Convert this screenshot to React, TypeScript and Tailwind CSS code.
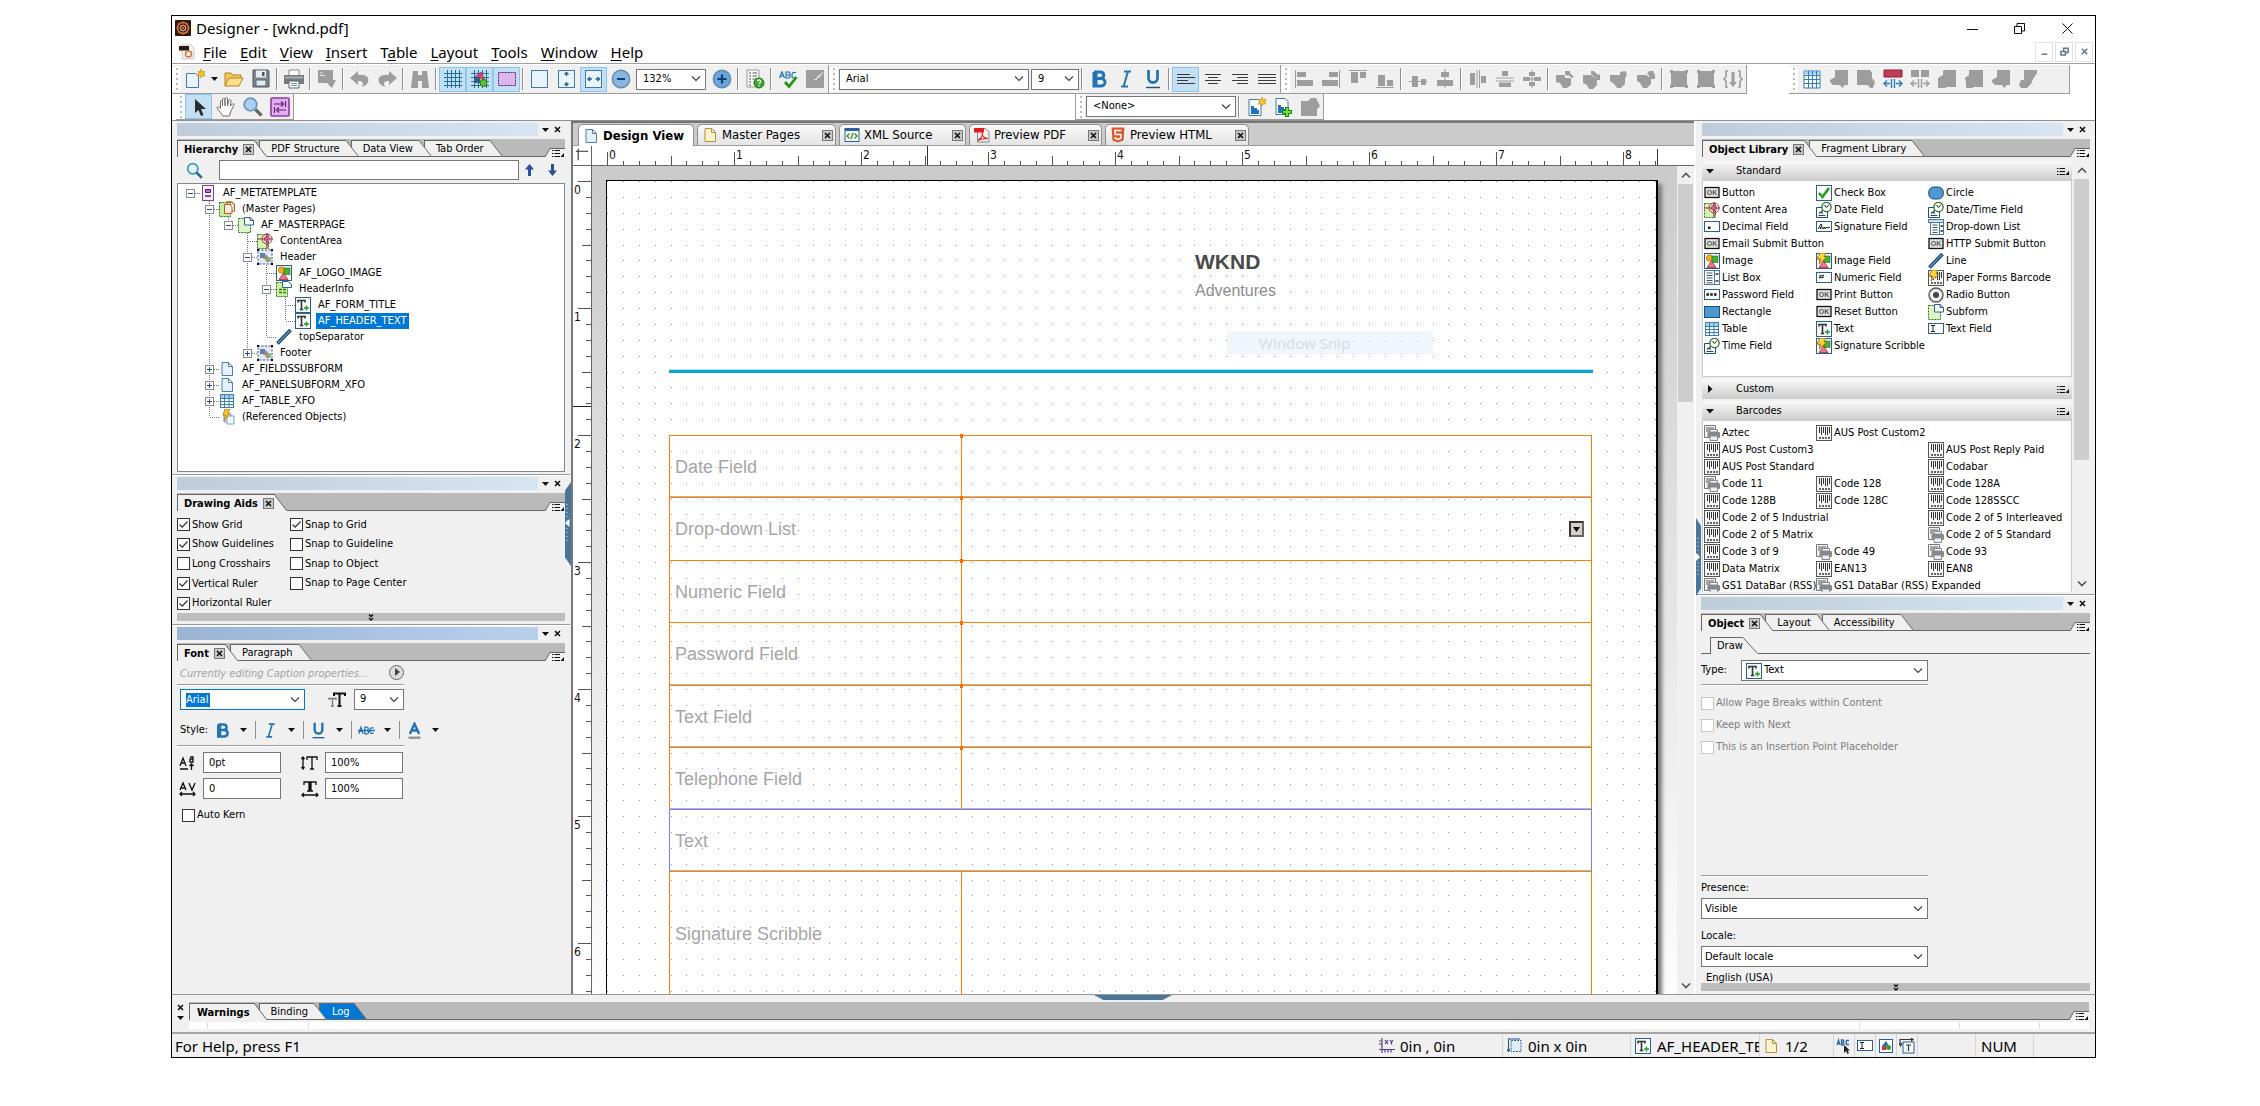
import React from "react";

const TAHOMA = "font-['DejaVu_Sans_Condensed','DejaVu_Sans',sans-serif]";
const G = "#9d9d9d";

/* ---------- object icons, drawn on a 16px square ---------- */

const page = (fill: string, stroke: string) => (
  <path d="M3 1.5h6.5l4 4v9H3zM9.5 1.5v4h4" fill={fill} stroke={stroke} />
);
const bolt = <path d="M4 0h6L8 4h3L3 11l1.500-5H1z" fill="#ffd43a" stroke="#8a6a1a" strokeWidth=".8" />;
const clock = (
  <>
    <path d="M.5 5.500h11v10H.5z" fill="#fff" stroke="#1d4f7c" />
    <path d="M2.500 13.500h7M3 11.500l3-2.500v3" stroke="#345" strokeWidth="1.200" fill="none" />
    <circle cx="10.500" cy="5" r="4.600" fill="#fff" stroke="#2f7d2c" strokeWidth="1.400" />
    <path d="M8.500 3l2 2.500 2.500-3" stroke="#222" fill="none" />
  </>
);
const pic = (
  <>
    <rect x=".5" y=".5" width="15" height="15" fill="#fff" stroke="#2c5f8e" />
    <circle cx="5.500" cy="5" r="3.300" fill="#f6a91b" stroke="#b06f00" strokeWidth=".6" />
    <rect x="8" y="3" width="6" height="6.500" fill="#45b336" stroke="#1f6b17" strokeWidth=".6" />
    <path d="M3 14.500l4.500-6.500 4.500 6.500z" fill="#e9788b" stroke="#a3283f" strokeWidth=".8" />
  </>
);
const bars = (
  <>
    <rect x=".5" y=".5" width="15" height="15" fill="#f6f6f6" stroke="#555" />
    <path d="M3.500 2v6M5.500 2v8M7.500 2v6M9.500 2v8M11.500 2v8M13.500 2v6" stroke="#333" />
    <path d="M3 13h11" stroke="#666" strokeWidth="2" strokeDasharray="2 1" />
  </>
);
const box = <rect x=".5" y="2.500" width="15" height="10" fill="#fff" stroke="#2c5f8e" />;

const ICONS: Record<string, React.ReactNode> = {
  ok: (
    <>
      <rect x="1" y="2.500" width="14" height="10" fill="#e2e2e2" stroke="#111" strokeWidth="1.300" />
      <text x="8" y="10" fontSize="7" fontWeight="bold" textAnchor="middle" fill="#555" fontFamily="Liberation Sans">OK</text>
    </>
  ),
  check: (
    <>
      <rect x=".5" y=".5" width="15" height="15" fill="#fff" stroke="#2c5f8e" />
      <path d="M3 8l3.500 4L13 3" fill="none" stroke="#1fa01a" strokeWidth="2.600" />
    </>
  ),
  circle: <rect x=".8" y="2" width="14.500" height="12" rx="5" fill="#4f97cf" stroke="#1d4f7c" />,
  content: (
    <>
      <path d="M.5 1.500h11v14H.5z" fill="#d5f2b4" stroke="#2e7a12" strokeDasharray="2 1" />
      <path d="M0 6h16M10 0v15" stroke="#a02045" strokeWidth="1.200" />
      <circle cx="10" cy="6" r="5" fill="none" stroke="#b0355a" />
      <circle cx="10" cy="6" r="2.500" fill="#f2bccb" stroke="#b0355a" />
      <path d="M7 6h6M10 3v6" stroke="#a02045" strokeWidth=".8" />
    </>
  ),
  date: clock,
  decimal: <>{box}<rect x="4" y="7.500" width="2.500" height="2.500" fill="#222" /></>,
  sign: <>{box}<path d="M2 10l3-5 1 1-2 4 3-2v2l2-2v2l2-2 1 1 2-1" fill="none" stroke="#222" /></>,
  num: <>{box}<path d="M3.500 8.500l1.500-4M6 8.500l1.500-4M3 5.800h5M2.700 7.500h5" stroke="#222" strokeWidth=".8" /></>,
  pass: <>{box}<path d="M2.500 7.500h10" stroke="#111" strokeWidth="2.400" strokeDasharray="2.400 1.400" /></>,
  textf: <>{box}<path d="M3 4.500h4M3 10.500h4M5 4.500v6" stroke="#222" /></>,
  drop: (
    <>
      <rect x=".5" y=".5" width="15" height="3" fill="#cfe2f3" stroke="#4a7aa5" />
      <rect x="2.500" y="3.500" width="13" height="12" fill="#fff" stroke="#4a7aa5" />
      <path d="M4.500 6h5M4.500 8.500h5M4.500 11h5M4.500 13.500h5" stroke="#456" />
      <path d="M11.500 3.500v12" stroke="#4a7aa5" />
      <path d="M12.500 7h2.500M12.500 12h2.500" stroke="#234" strokeWidth="1.500" />
    </>
  ),
  list: (
    <>
      <rect x=".5" y=".5" width="15" height="14" fill="#fff" stroke="#4a7aa5" />
      <path d="M2.500 3h6M2.500 5.500h6M2.500 8h6M2.500 10.500h6M2.500 12.800h6" stroke="#456" />
      <path d="M10.500 .5v14" stroke="#4a7aa5" />
      <path d="M11.500 4h3M11.500 11h3" stroke="#234" strokeWidth="1.500" />
    </>
  ),
  image: pic,
  imgf: <>{pic}{bolt}</>,
  paper: <>{bars}{bolt}</>,
  line: <><path d="M1.500 14.500L14.500 1" stroke="#153a5e" strokeWidth="3.600" /><path d="M2 14L14 1.500" stroke="#4f97cf" strokeWidth="1.600" /></>,
  radio: (
    <>
      <circle cx="8" cy="8" r="7" fill="#eee" stroke="#555" strokeWidth="1.400" />
      <circle cx="8" cy="8" r="3" fill="#444" />
    </>
  ),
  rect: <rect x=".5" y="2.500" width="15" height="11" fill="#4f97cf" stroke="#1d4f7c" />,
  subform: (
    <>
      <path d="M.5 1.500h12v14H.5z" fill="#dff5c8" stroke="#2e7a12" strokeDasharray="2 1" />
      <path d="M6.500 .5h5.500l3.500 3v4.500h-9z" fill="#fff" stroke="#2c5f9e" />
      <path d="M12 .5v3h3.500" fill="none" stroke="#2c5f9e" />
    </>
  ),
  table: (
    <>
      <rect x="1.500" y="1.500" width="13" height="13" fill="#fff" stroke="#3a7ebb" />
      <path d="M2 3.500h12" stroke="#9fd3e6" strokeWidth="3" />
      <path d="M1.500 5.500h13M1.500 8.500h13M1.500 11.500h13M5.500 1.500v13M10 1.500v13" stroke="#3a7ebb" />
    </>
  ),
  text: (
    <>
      <rect x=".5" y=".5" width="15" height="15" fill="#f5f9fd" stroke="#2c5f8e" />
      <path d="M3 5.500V3.500h7v2M6.500 3.500v9M4.800 12.500h3.400" stroke="#333" strokeWidth="1.600" fill="none" />
      <path d="M9 11h5M11.500 8.500v5" stroke="#2f9a20" strokeWidth="1.400" />
    </>
  ),
  bar: bars,
  barp: (
    <>
      <path d="M.5 .5h11v12H.5z" fill="#f4f4f4" stroke="#777" />
      <path d="M3 2v5M5 2v5M7 2v3M9 2v3" stroke="#555" />
      <rect x="3.500" y="7" width="12.500" height="6" rx="1" fill="#84898e" />
      <path d="M6 4.500h7.500V7H6z" fill="#fff" stroke="#888" />
      <path d="M6 11h7.500v4.500H6z" fill="#e8eef2" stroke="#888" />
    </>
  ),
  form: (
    <>
      <rect x="2.500" y=".5" width="11" height="15" fill="#fbf3ff" stroke="#8a3aa8" />
      <path d="M5.500 4.500h5v3h-5z" fill="#b678cc" stroke="#5b1d78" />
      <path d="M5 11h6" stroke="#5b1d78" strokeWidth="1.500" />
    </>
  ),
  masters: (
    <>
      <path d="M.5 1.500h11v14H.5z" fill="#c8eda0" stroke="#2e7a12" strokeDasharray="2 1" />
      <path d="M5.500 3.500h5l2.500 2v7H5.500z" fill="#fff3ea" stroke="#d2541a" />
      <path d="M8 3V.800h4.500l3 2.700V10H13" fill="none" stroke="#d2541a" strokeWidth="1.200" />
    </>
  ),
  group: (
    <>
      <rect x="1" y="1" width="14" height="14" fill="#e4e8f8" stroke="#3c3c8c" strokeDasharray="2 1.500" />
      <path d="M0 0h2v2H0zM14 0h2v2h-2zM0 14h2v2H0zM14 14h2v2h-2z" fill="#111" />
      <rect x="3" y="4" width="5" height="5" fill="#5b84b5" />
      <path d="M6 10l3-5 3 5z" fill="#c56a86" />
      <circle cx="11" cy="10.500" r="2.700" fill="#7fae6a" />
    </>
  ),
  info: (
    <>
      <path d="M.5 1.500h11v14H.5z" fill="#cdf0a4" stroke="#2e7a12" strokeDasharray="2 1" />
      <path d="M3 8.500h7M3 11.500h7" stroke="#2e7a12" strokeWidth="1.500" strokeDasharray="3 1" />
      <path d="M6.500 .5h5.500l3.500 3v3h-9z" fill="#fff" stroke="#2c5f9e" />
    </>
  ),
  doc: page("#e6f0fa", "#4b7fb5"),
  gold: page("#fdf3cf", "#b8913a"),
  refs: (
    <>
      <path d="M5 5h7v8H5z" fill="#e6f0fa" stroke="#7ba0c8" />
      <path d="M8 7h7v8H8z" fill="#f3f8fd" stroke="#7ba0c8" />
      <path d="M6 0h5L8.500 4H11l-6 8 1.500-6H4z" fill="#ffc52a" stroke="#a87410" strokeWidth=".8" />
    </>
  ),
  xml: (
    <>
      <rect x="1" y="1.500" width="14" height="13" fill="#f2f7fc" stroke="#2c5f9e" />
      <path d="M1 3h14" stroke="#2c5f9e" strokeWidth="2" />
      <path d="M5.500 6.500L3 9l2.500 2.500M10.500 6.500L13 9l-2.500 2.500M9 6l-2 6" fill="none" stroke="#4c8a1c" strokeWidth="1.400" />
    </>
  ),
  pdf: (
    <>
      <path d="M3.500 1.500h8l3.500 3.500v10H3.500z" fill="#f3f3f3" stroke="#888" />
      <path d="M0 1h10v4.500H0z" fill="#e21b1b" />
      <path d="M4 13.500c4-3 5-6 4-8 0 4 3 6 6 6-4 0-7 0-10 2z" fill="none" stroke="#e21b1b" strokeWidth="1.200" />
    </>
  ),
  html: (
    <>
      <path d="M1.500 .5h13l-1 13L8 15.500l-5.500-2z" fill="#e4542a" />
      <path d="M11.500 3.500H5l.3 4h5.700l-.4 4L8 12.300 5.400 11.500l-.1-1.500" fill="none" stroke="#fff" strokeWidth="1.600" />
    </>
  ),
  coords: (
    <path d="M3 0v15M0 11.500h16M6 11.500v3M9 11.500v3M12 11.500v3M0 3h3M0 6h3M6 2l3 4M9 2L6 6M11 2l1.500 2L14 2M12.500 4v2.500" stroke="#5a3f8c" fill="none" strokeWidth="1.200" />
  ),
  size: (
    <>
      <rect x="4" y="2.500" width="10" height="11" fill="#e3eefa" stroke="#2c5f9e" strokeDasharray="2 1" />
      <path d="M1.500 1v12M1 1h12M0 11l1.500 3L3 11" stroke="#1d4f8c" fill="none" />
    </>
  ),
  abcptr: (
    <>
      <path d="M1 7l1.500-5L4 7M1.500 5.500h2M5.500 7V2h1.500l1 1.200-1 1.300H5.500 7l1 1.200L7 7zM13 2.500h-2.500L10 4.500l.5 2H13" fill="none" stroke="#2c6aa8" strokeWidth="1.300" />
      <path d="M8 7v8l2-2 1.500 3 1.500-1-1.500-2.500H14z" fill="#222" />
    </>
  ),
  shapes: (
    <>
      <rect x="1.500" y="1.500" width="13" height="13" fill="#fff" stroke="#2c5f8e" />
      <path d="M4 8l4-5 3 5z" fill="#2c6aa8" />
      <circle cx="10.500" cy="9.500" r="2.500" fill="#2fa12a" />
      <rect x="4" y="8" width="4" height="4" fill="#cc3355" />
    </>
  ),
  flow: (
    <>
      <rect x="4" y="4" width="11" height="11" fill="#f5f9fd" stroke="#2c5f8e" />
      <path d="M1 6V1.500h13M12 0l2 1.500L12 3M0 5l1.500 3L3 5M7 7h5M9.500 7v6" fill="none" stroke="#333" strokeWidth="1.200" />
    </>
  ),
  logo: (
    <>
      <rect width="16" height="16" rx="1" fill="#2b1a12" />
      <circle cx="8" cy="8" r="5.500" fill="none" stroke="#e0733a" strokeWidth="1.500" />
      <circle cx="8" cy="8" r="2.800" fill="none" stroke="#d8b9a0" />
      <path d="M8 1v14M1 8h14M3 3l10 10M13 3L3 13" stroke="#e0733a" strokeWidth=".6" />
    </>
  ),
  file: (
    <>
      <path d="M3 1h9l3 3v11H3z" fill="#f1f1f1" stroke="#c9c9c9" />
      <path d="M0 2h10v4.500H0z" fill="#251a16" />
      <circle cx="9.500" cy="10" r="3" fill="none" stroke="#e0733a" strokeWidth="1.500" />
    </>
  ),
};

function Icon({ name }: { name: string }) {
  return (
    <svg viewBox="0 0 16 16" className="size-4 shrink-0" aria-hidden="true">
      {ICONS[name]}
    </svg>
  );
}

/* ---------- toolbar icons, drawn on a 20px square ---------- */

const spark = <path d="M16 0l1 3 3-1-1 3 1 2-3 0-1 2-1-2-3 0 1.500-2L13 2l2 1z" fill="#f5c32c" stroke="#c08a10" strokeWidth=".6" />;
const blank = <rect x="1.500" y="1.500" width="16" height="17" fill="#eaf3fb" stroke="#3c7ab5" />;
const gridp = <path d="M1 4.500h18M1 8.500h18M1 12.500h18M1 16.500h18M4.500 1v18M8.500 1v18M12.500 1v18M16.500 1v18" stroke="#1f6fae" />;

const TOOLS: Record<string, React.ReactNode> = {
  new: <><path d="M1.500 4.500h9l3 3v11h-12z" fill="#eaf3fb" stroke="#3c7ab5" />{spark}</>,
  open: <><path d="M1 17V4h6l2 2h8v3" fill="#f6c65b" stroke="#b9821d" /><path d="M1 17l4-8h14l-4 8z" fill="#ffe08e" stroke="#b9821d" /></>,
  save: <><path d="M2 1h15l1 1v16H2z" fill="#7d8790" stroke="#555" /><path d="M5 1.500h10v7H5z" fill="#e9edf0" /><path d="M5 11h10v6H5z" fill="#dfeaf2" stroke="#567" /><path d="M11 3h2.500v4H11z" fill="#555" /></>,
  print: <><path d="M5 1h10v6H5z" fill="#fff" stroke="#888" /><path d="M0 6h20v9H0z" fill="#737a80" /><path d="M1 8.500h18" stroke="#a9b0b5" strokeWidth="2" /><path d="M5 12h10v7H5z" fill="#fff" stroke="#666" /><path d="M7 14.500h6M7 16.500h6" stroke="#59c" /></>,
  tag: <><path d="M1 1h15v10h3l-4 8-5-5H1z" fill={G} /><path d="M3 4h3M3 6.500h5" stroke="#e8e8e8" /></>,
  undo: <path d="M0 9l8-7v4c8-1 12 3 10 7-1 3-4 4-6 5 2-4 1-6-4-6v4z" fill={G} />,
  redo: <path d="M20 9l-8-7v4C4 5 0 9 2 13c1 3 4 4 6 5-2-4-1-6 4-6v4z" fill={G} />,
  find: <path d="M3 2h5v4h4V2h5l2 17h-7v-7H8v7H1z" fill={G} />,
  grid: gridp,
  snap: <>{gridp}<path d="M5 8l6-5 4 8z" fill="#d8476a" stroke="#9c2242" strokeWidth=".7" /><path d="M4 8h6v6H4z" fill="#345b8c" /><circle cx="13.500" cy="14" r="3.500" fill="#59c22c" stroke="#2d7a10" /></>,
  area: <rect x="1.500" y="3.500" width="17" height="13" fill="#dcb8ea" stroke="#5b1d78" strokeDasharray="2 1" />,
  page1: blank,
  page2: <>{blank}<path d="M9.500 7V3.500M7.500 5.500l2-2 2 2M9.500 13v3.500M7.500 14.500l2 2 2-2" stroke="#1f5f9e" fill="none" strokeWidth="1.300" /></>,
  page3: <>{blank}<path d="M8 10H4M6 8l-2 2 2 2M11.500 10h4M13.500 8l2 2-2 2" stroke="#1f5f9e" fill="none" strokeWidth="1.300" /></>,
  minus: <><circle cx="10" cy="10" r="8.700" fill="#86b7df" stroke="#6a88a6" strokeWidth="1.400" /><path d="M6 10h8" stroke="#0d3f78" strokeWidth="2" /></>,
  plus: <><circle cx="10" cy="10" r="8.700" fill="#6aa6dc" stroke="#6a88a6" strokeWidth="1.400" /><path d="M5.500 10h9M10 5.500v9" stroke="#0d3f78" strokeWidth="2.200" /></>,
  report: <><path d="M2 1h12v17H2z" fill="#fafafa" stroke="#999" /><path d="M4 4h2M7.500 4H12M4 7h2M7.500 7H12M4 10h2M7.500 10H12M4 13h2M4 16h2" stroke="#555" /><circle cx="14" cy="14" r="5" fill="#35a926" stroke="#1d7412" /><path d="M12.300 12.500c0-2 3.400-2 3.400 0 0 1.200-1.700 1.200-1.700 2.500M14 16v1.200" stroke="#fff" fill="none" strokeWidth="1.300" /></>,
  spell: <><path d="M1 2h17v8H1z" fill="#dcebf8" /><path d="M1.500 9L4 3l2.500 6M2.500 7h3M8 9V3h2.500c2 0 2 3 0 3H8h2.500c2.500 0 2.500 3 0 3zM18 3.500h-3l-1 1.500v2.500l1 1.500h3" fill="none" stroke="#2c6aa8" strokeWidth="1.100" /><path d="M7 13l4 4.500L18.500 8" fill="none" stroke="#25991c" strokeWidth="2.800" /></>,
  chart: <><path d="M1 1h18v18H1z" fill={G} /><path d="M6 6h3v5h3V9h2l4-5v-1l-5 4-2 2v1H9V6z" fill="#e4e4e4" /></>,
  bold: <path d="M5 3h6c5 0 5 6.500 0 6.500H7M5 3V17h6.500c6 0 6-7.500 0-7.500M7 3V17" fill="none" stroke="#2474b5" strokeWidth="3" />,
  italic: <path d="M8 2.500h7M5 17.500h7M12 2.500l-4.500 15" fill="none" stroke="#2474b5" strokeWidth="2" />,
  under: <><path d="M5.500 1v8c0 6 9 6 9 0V1" fill="none" stroke="#2474b5" strokeWidth="2.800" /><path d="M3 18.500h14" stroke="#174f86" strokeWidth="1.400" /></>,
  left: <path d="M1 5.500h13M1 8.500h18M1 11.500h11M1 14.500h18" stroke="#3a3a3a" />,
  center: <path d="M2 5.500h16M5 8.500h10M2 11.500h16M5 14.500h10" stroke="#3a3a3a" />,
  right: <path d="M2 5.500h16M7 8.500h11M2 11.500h16M7 14.500h11" stroke="#3a3a3a" />,
  justify: <path d="M1 5.500h18M1 8.500h18M1 11.500h18M1 14.500h18" stroke="#3a3a3a" strokeWidth="1.200" />,
  al: <path d="M1 1h1v18H1zM3 3h9v5H3zM3 11h16v6H3z" fill={G} />,
  ar: <path d="M18 1h1v18h-1zM8 3h9v5H8zM1 11h16v6H1z" fill={G} />,
  at: <path d="M1 1h18v1H1zM3 3h7v11H3zM12 3h6v6h-6z" fill={G} />,
  ab: <path d="M1 18h18v1H1zM3 6h7v11H3zM12 11h6v6h-6z" fill={G} />,
  mid: <path d="M1 12h18v1H1zM4 7h6v11H4zM13 10h5v6h-5z" fill={G} />,
  cen: <path d="M9.500 0h1v19h-1zM6 3h8v5H6zM2 11h16v6H2z" fill={G} />,
  dh: <path d="M2 4h5v12H2zM8.500 1h1v18h-1zM11 1h1v18h-1zM13 7h5v7h-5z" fill={G} />,
  dv: <path d="M7 2h6v5H7zM1 8.500h18v1H1zM1 11.500h18v1H1zM4 13.500h12v4.500H4z" fill={G} />,
  dc: <path d="M7 3h6v4H7zM7 13h6v4H7zM1 8h7v4H1zM12 8h7v4h-7zM9.500 1h1v18h-1zM1 9.500h18v1H1z" fill={G} />,
  o1: <path d="M1 6h9v3h6v7l-4 3H8l-3-5-4-1zM10 2h5v2l4 4-2 1-4-3-1 1-2-2z" fill={G} />,
  o2: <path d="M1 6h8l6 4v6l-4 4H7l-2-4-4-2zM9 2h3l4 4 2-1v6h-6l2-2-5-4z" fill={G} />,
  o3: <path d="M1 6h10l5 3v6l-4 4H8l-3-4-4-3zM11 6V3l5-1 2 3-2 5-3-2z" fill={G} />,
  o4: <path d="M1 6h9l5 3v6l-4 4H7l-3-5-3-2zM11 5l2-3h4l2 4v4h-5l-1-4z" fill={G} />,
  sq: <path d="M1 1h3v1h12V1h3v3h-1v12h1v3h-3v-1H4v1H1v-3h1V4H1z" fill={G} />,
  br: <><path d="M5 2H3v6L1 10l2 2v6h2M15 2h2v6l2 2-2 2v6h-2" fill="none" stroke={G} strokeWidth="1.600" /><path d="M8.500 3h3v10H14l-4 5-4-5h2.500z" fill={G} /></>,
  tgrid: <><path d="M2 2h16v17H2z" fill="#fff" stroke="#2f7dbd" /><path d="M2 4h16" stroke="#a5cdec" strokeWidth="3" /><path d="M2 6.500h16M2 10.500h16M2 14.500h16M6.500 2v17M10.500 2v17M14.500 2v17" stroke="#2f7dbd" /></>,
  g1: <path d="M6 1h13v15h-3l-3 3-2-3H4l-3-3v-2l5-3z" fill={G} />,
  g2: <path d="M1 1h13l2 3v5l3 4-2 6h-3l-2-3H1z" fill={G} />,
  split: <><path d="M1 1h18v7H1z" fill="#c23b57" stroke="#8d2038" /><path d="M8.500 10v9M11.500 10v9M1 14.500h6M4 11.500l-3 3 3 3M19 14.500h-6M16 11.500l3 3-3 3" stroke="#2f7dbd" fill="none" strokeWidth="1.400" /></>,
  split2: <><path d="M1 1h8v7H1zM11 1h8v7h-8z" fill={G} /><path d="M8.500 10v9M11.500 10v9M1 14.500h6M4 11.500l-3 3 3 3M19 14.500h-6M16 11.500l3 3-3 3" stroke={G} fill="none" strokeWidth="1.400" /></>,
  g3: <path d="M7 1h12v17H9v1H1V9l5-3V2z" fill={G} />,
  g4: <path d="M5 1h14v17H9v1H2v-5l-1-5 4-3z" fill={G} />,
  g5: <path d="M6 1h13v3l-4 6-2 5-4 4H3l-2-3 2-5h3z" fill={G} />,
  arrow: <path d="M6 2v14l3.500-3 2.500 6 2.500-1L12 12h5z" fill="#2b2b2b" />,
  hand: <path d="M7 19l-6-8c0-2 2-1.500 3.500.5V4.500c0-1.500 2-1.500 2 0V9V2.500C6.500 1 9 1 9 2.500V9V1.800c0-1.500 2.500-1.500 2.500 0V9l1.200-5.500c.3-1.500 2.500-1 2.300.5L14.500 9l2-2c1-.8 2 .2 1.500 1l-3.500 7-1 4z" fill="#fff" stroke="#6e6e6e" />,
  zoom: <><circle cx="7.500" cy="7.500" r="6.300" fill="#a9d2f2" stroke="#6f97bd" strokeWidth="1.800" /><path d="M12.500 12.500l6 6" stroke="#666" strokeWidth="3.200" /></>,
  tabs: <><rect x="1" y="1" width="18" height="18" rx="1" fill="#e0b0ec" stroke="#8a3aa8" strokeWidth="1.600" /><path d="M4 7h9M11 4.500L13.500 7 11 9.500M15.500 4v6M16 13h-8M9 10.500L6.500 13 9 15.500M4.500 10v6" stroke="#5b1478" fill="none" strokeWidth="1.100" /></>,
  ds1: <><path d="M3 2.500h9l3 3v13H3z" fill="#fff" stroke="#3c7ab5" /><path d="M5 9h3v2h3v2h2v4H5z" fill="#2474b5" />{spark}</>,
  ds2: <><path d="M3 1.500h9l3 3v13H3z" fill="#fff" stroke="#3c7ab5" /><path d="M5 8h3v2h3v2h2v4H5z" fill="#2474b5" /><path d="M9 15h10M14 10v10" stroke="#1d8a0e" strokeWidth="4" /><path d="M10 15h8M14 11v8" stroke="#6ee03a" strokeWidth="2" /></>,
  ds3: <path d="M1 4h7l3-3h5l2 4 2 4-3 3v7H1z" fill={G} />,
};

function Tool({ name, label, on }: { name: string; label: string; on?: boolean }) {
  return (
    <button
      type="button"
      aria-label={label}
      aria-pressed={on}
      className={"flex h-[25px] w-[27px] shrink-0 items-center justify-center " + (on ? "border border-[#8cc4ee] bg-[#c3dff4]" : "")}
    >
      <svg viewBox="0 0 20 20" className="size-5" aria-hidden="true">{TOOLS[name]}</svg>
    </button>
  );
}

const Sep = () => <span className="mx-[2px] h-[22px] w-[2px] shrink-0 border-r border-white bg-[#8f8f8f]" />;
const Grip = () => (
  <span className="flex h-[25px] w-[9px] shrink-0 flex-col items-center justify-around bg-white">
    {[0, 1, 2, 3, 4].map((i) => <i key={i} className="size-[2px] bg-[#bdbdbd]" />)}
  </span>
);

function Bar({ children, className = "" }: { children: React.ReactNode; className?: string }) {
  return <div className={"flex h-full shrink-0 items-center border-r border-b border-[#9b9b9b] bg-[#f0f0f0] " + className}>{children}</div>;
}

const Chevron = () => (
  <svg viewBox="0 0 10 6" className="pointer-events-none absolute top-1/2 right-[4px] h-[6px] w-[10px] -translate-y-1/2" aria-hidden="true">
    <path d="M1 .5l4 4 4-4" fill="none" stroke="#444" strokeWidth="1.200" />
  </svg>
);

function Combo({ label, value, className = "", pad = "pl-[6px]", icon }: { label: string; value: string; className?: string; pad?: string; icon?: string }) {
  return (
    <span className={"relative inline-flex h-[21px] shrink-0 items-center border border-[#767676] bg-white " + className}>
      {icon && <span className="absolute left-1"><Icon name={icon} /></span>}
      <select aria-label={label} defaultValue={value} className={"h-full w-full appearance-none bg-transparent text-[11px] text-black outline-none " + pad}>
        <option>{value}</option>
      </select>
      <Chevron />
    </span>
  );
}

/* ---------- dock panels ---------- */

const Tri = () => (
  <svg viewBox="0 0 7 4" className="h-[4px] w-[7px] shrink-0" aria-hidden="true"><path d="M0 0h7L3.500 4z" fill="#111" /></svg>
);
const Cross = () => (
  <svg viewBox="0 0 7 7" className="size-[7px] shrink-0" aria-hidden="true"><path d="M1 1l5 5M6 1L1 6" stroke="#111" strokeWidth="1.600" /></svg>
);
const CloseBox = () => (
  <span className="flex size-[11px] shrink-0 items-center justify-center border border-[#777] bg-[#c9c9c9]"><Cross /></span>
);

function Caption({ active }: { active?: boolean }) {
  return (
    <div className="flex h-[13px] items-center">
      <div className={"h-full flex-1 bg-gradient-to-r " + (active ? "from-[#9ab4d2] to-[#b9d0ed]" : "from-[#bfccda] to-[#d7e4f2]")} />
      <button type="button" aria-label="Panel menu" className="ml-[4px] w-[8px]"><Tri /></button>
      <button type="button" aria-label="Close panel" className="mr-[4px] ml-[4px] w-[7px]"><Cross /></button>
    </div>
  );
}

const Menu = () => (
  <svg viewBox="0 0 12 8" className="h-[8px] w-[12px]" aria-hidden="true">
    <path d="M0 1.500h1.500M0 4.500h1.500M0 7.500h1.500M2.500 1.500H8M2.500 4.500H8M2.500 7.500H8" stroke="#111" />
    <path d="M12 4v4H8.500z" fill="#111" />
  </svg>
);

const Z = ["z-30", "z-20", "z-10", "z-0"];

function Tabs({ items, blue, plain }: { items: string[]; blue?: number; plain?: boolean }) {
  return (
    <div role="tablist" className="relative flex h-[18px] items-end bg-[#bababa] shadow-[inset_0_-1px_0_#666]">
      {items.map((t, i) => {
        const fill = blue === i ? "#0078d7" : "#f0f0f0";
        return (
          <button
            key={t}
            role="tab"
            type="button"
            aria-selected={i === 0}
            className={"relative flex h-[17px] text-[11px] leading-[15px] " + Z[i] + (i === 0 ? " font-bold" : " -ml-[8px]")}
          >
            <span
              className={
                "flex h-full items-center gap-[5px] border-t border-l border-[#666] whitespace-nowrap " +
                (blue === i ? "bg-[#0078d7] pl-[12px] pr-[4px] text-white " : "bg-[#f0f0f0] ") +
                (i === 0 ? (plain ? "pl-[7px] pr-[4px]" : "pl-[6px]") : blue === i ? "border-b" : "border-b pr-[6px] pl-[11px]")
              }
            >
              {t}
              {i === 0 && !plain && <CloseBox />}
            </span>
            <svg viewBox="0 0 13 17" className="h-[17px] w-[13px]" aria-hidden="true">
              <path d="M0 0L13 17H0z" fill={fill} />
              <path d={i === 0 ? "M0 0L12.500 16.500" : "M0 .5L12.500 16.500H0"} fill="none" stroke="#666" />
            </svg>
          </button>
        );
      })}
      <button type="button" aria-label="Panel options" className="ml-auto flex h-[9px] items-end">
        <svg viewBox="0 0 6 9" className="h-[9px] w-[6px]" aria-hidden="true"><path d="M0 9L5 .5h1V9z" fill="#f0f0f0" /><path d="M0 9L5 .5h1" fill="none" stroke="#666" /></svg>
        <span className="flex h-[9px] w-[14px] items-center justify-center border-t border-[#666] bg-[#f0f0f0]"><Menu /></span>
      </button>
    </div>
  );
}

const More = () => (
  <button type="button" aria-label="Show more" className="flex h-[8px] w-full shrink-0 items-center justify-center bg-[#bdbdbd]">
    <svg viewBox="0 0 6 7" className="h-[7px] w-[6px]" aria-hidden="true"><path d="M1 .5l2 2 2-2M1 4l2 2 2-2" fill="none" stroke="#111" strokeWidth="1.300" /></svg>
  </button>
);

const Rule = ({ className = "" }: { className?: string }) => <div className={"h-[2px] shrink-0 border-t border-[#999] bg-white " + className} />;

function Check({ label, on, disabled }: { label: string; on?: boolean; disabled?: boolean }) {
  return (
    <label className={"flex items-center gap-[2px] text-[11px] leading-[14px] whitespace-nowrap " + (disabled ? "text-[#7d7d7d]" : "")}>
      <span className={"relative size-[13px] shrink-0 border bg-white " + (disabled ? "border-[#c8c8c8]" : "border-[#333]")}>
        <input type="checkbox" defaultChecked={on} disabled={disabled} className="peer absolute inset-0 size-full appearance-none" />
        <svg viewBox="0 0 11 11" className="pointer-events-none absolute inset-0 hidden size-full peer-checked:block" aria-hidden="true">
          <path d="M1.500 5.500l2.700 2.700L9.500 2.500" fill="none" stroke="#333" strokeWidth="1.200" />
        </svg>
      </span>
      {label}
    </label>
  );
}

/* ---------- hierarchy tree ---------- */

const TREE: [string, string, string][] = [
  ["r", "form", "AF_METATEMPLATE"],
  [" m", "masters", "(Master Pages)"],
  [" |n", "subform", "AF_MASTERPAGE"],
  [" | T", "content", "ContentArea"],
  [" | m", "group", "Header"],
  [" | |T", "image", "AF_LOGO_IMAGE"],
  [" | |m", "info", "HeaderInfo"],
  [" | ||T", "text", "AF_FORM_TITLE"],
  [" | ||L", "text", "AF_HEADER_TEXT"],
  [" | |L", "line", "topSeparator"],
  [" | q", "group", "Footer"],
  [" p", "doc", "AF_FIELDSSUBFORM"],
  [" p", "doc", "AF_PANELSUBFORM_XFO"],
  [" p", "table", "AF_TABLE_XFO"],
  [" L", "refs", "(Referenced Objects)"],
];

function Guide({ kind }: { kind: string }) {
  const through = "|Tmp".includes(kind);
  const boxed = "rmnpq".includes(kind);
  return (
    <svg viewBox="0 0 19 16" className="h-4 w-[19px] shrink-0" shapeRendering="crispEdges" aria-hidden="true">
      {kind !== " " && kind !== "r" && <path d={through ? "M9.500 0V16" : "M9.500 0V8"} stroke="#777" strokeDasharray="1 1" />}
      {kind !== " " && kind !== "|" && <path d="M10 8.500H19" stroke="#777" strokeDasharray="1 1" />}
      {boxed && <rect x="5.500" y="4.500" width="8" height="8" fill="#fff" stroke="#8c8c8c" />}
      {boxed && <path d={"M7 8.500h5" + ("pq".includes(kind) ? "M9.500 6v5" : "")} stroke="#2b4a9a" />}
    </svg>
  );
}

function Hierarchy() {
  return (
    <section className="px-[5px] pt-[2px]">
      <Caption />
      <div className="mt-[3px]"><Tabs items={["Hierarchy", "PDF Structure", "Data View", "Tab Order"]} /></div>
      <div className="flex h-[26px] items-center">
        <svg viewBox="0 0 20 20" className="ml-[9px] size-[17px]" aria-hidden="true">
          <circle cx="8" cy="8" r="6" fill="#eaf6fc" stroke="#3a9cc4" strokeWidth="2" /><path d="M12.500 12.500l6 6" stroke="#2d6a9a" strokeWidth="3" />
        </svg>
        <input aria-label="Search hierarchy" className="ml-[16px] h-5 min-w-0 flex-1 border border-[#777] bg-white px-1 text-[11px]" />
        {["Previous", "Next"].map((n, i) => (
          <button key={n} type="button" aria-label={n} className={i ? "mr-2 ml-[14px]" : "ml-[6px]"}>
            <svg viewBox="0 0 9 12" className="h-3 w-[9px]" aria-hidden="true">
              <path d={i ? "M4.500 12L0 6.500h3V0h3v6.500h3z" : "M4.500 0L0 5.500h3V12h3V5.500h3z"} fill="#28509c" />
            </svg>
          </button>
        ))}
      </div>
      <ul role="tree" className="h-[289px] border border-[#828790] bg-white pt-[1px] pl-[3px] text-[11px] leading-[14px]">
        {TREE.map(([cols, icon, name]) => (
          <li key={name} role="treeitem" className="flex h-4 items-center">
            {cols.split("").map((k, i) => <Guide key={i} kind={k} />)}
            <Icon name={icon} />
            <span className={"ml-[5px] px-[2px] whitespace-nowrap " + (name === "AF_HEADER_TEXT" ? "bg-[#0078d7] py-[1px] text-white" : "")}>{name}</span>
          </li>
        ))}
      </ul>
    </section>
  );
}

function DrawingAids() {
  return (
    <section className="px-[5px] pt-[1px]">
      <Caption />
      <div className="mt-[3px]"><Tabs items={["Drawing Aids"]} /></div>
      <div className="flex gap-[27px] pt-[4px]">
        <div className="flex h-[98px] w-[86px] flex-col justify-around">
          <Check label="Show Grid" on /><Check label="Show Guidelines" on /><Check label="Long Crosshairs" />
          <Check label="Vertical Ruler" on /><Check label="Horizontal Ruler" on />
        </div>
        <div className="flex h-[78px] flex-col justify-around">
          <Check label="Snap to Grid" on /><Check label="Snap to Guideline" /><Check label="Snap to Object" /><Check label="Snap to Page Center" />
        </div>
      </div>
      <More />
    </section>
  );
}

function StyleButton({ name, label, sep = true }: { name: string; label: string; sep?: boolean }) {
  const extra: Record<string, React.ReactNode> = {
    strike: <path d="M1 14l2.500-8L6 14M2 11h3M8 14V6h2.500c2 0 2 4 0 4H8h2.500c2.500 0 2.500 4 0 4zM18.500 7h-3L14 8.500v3l1.500 2h3M0 10h20" fill="none" stroke="#2474b5" strokeWidth="1.500" />,
    color: <><path d="M4.500 14L10 2l5.500 12M6.500 10h7" fill="none" stroke="#2474b5" strokeWidth="2.800" /><path d="M3 17h14v3H3z" fill="#999" /></>,
  };
  return (
    <button type="button" aria-label={label} className="flex h-[18px] items-center">
      <svg viewBox="0 0 20 20" className="size-[17px]" aria-hidden="true">{extra[name] ?? TOOLS[name]}</svg>
      <span className="ml-[9px]"><Tri /></span>
      {sep && <span className="mr-[6px] ml-[8px] h-[18px] w-px bg-[#8f8f8f]" />}
    </button>
  );
}

function Field({ label, value, d }: { label: string; value: string; d: string }) {
  return (
    <label className="flex items-center">
      <svg viewBox="0 0 18 16" className="h-4 w-[18px]" aria-hidden="true"><path d={d} fill="none" stroke="#111" strokeWidth="1.300" /></svg>
      <input aria-label={label} defaultValue={value} className="ml-[6px] h-[21px] w-[78px] border border-[#767676] bg-white px-[5px] text-[11px]" />
    </label>
  );
}

function FontPanel() {
  return (
    <section className="min-h-0 flex-1 overflow-hidden px-[5px] pt-[1px]">
      <Caption active />
      <div className="mt-[3px]"><Tabs items={["Font", "Paragraph"]} /></div>
      <div className="w-[227px]">
        <div className="flex h-[23px] items-center justify-between pt-[3px] pl-[3px] text-[11px] text-[#a3a3a3] italic">
          <span>Currently editing Caption properties...</span>
          <button type="button" aria-label="Caption options" className="mt-[-4px] flex size-[15px] items-center justify-center rounded-full border border-[#666] bg-[#ddd]">
            <svg viewBox="0 0 6 8" className="h-2 w-[6px]" aria-hidden="true"><path d="M1 0l5 4-5 4z" fill="#444" /></svg>
          </button>
        </div>
        <Rule />
        <div className="flex items-center justify-between py-[3px] pl-[3px]">
          <span className="relative inline-flex h-[21px] w-[125px] items-center border border-[#0078d7] bg-white pl-[5px] text-[11px]">
            <input aria-label="Font name" defaultValue="Arial" className="w-[24px] bg-[#0078d7] leading-[14px] text-white outline-none" />
            <Chevron />
          </span>
          <span className="flex items-center gap-[8px]">
            <svg viewBox="0 0 18 16" className="h-4 w-[18px]" aria-hidden="true">
              <path d="M1 8V6.500h7V8M4.500 6.500V14M3 14h3" stroke="#777" fill="none" strokeWidth="1.300" /><path d="M6 4V1.500h11V4M11.500 1.500V14M9.500 14h4" stroke="#111" fill="none" strokeWidth="2" />
            </svg>
            <Combo label="Font size" value="9" className="w-[50px]" pad="pl-[5px]" />
          </span>
        </div>
      </div>
      <div className="mt-[5px] flex h-[24px] items-center pl-[3px] text-[11px]">
        <span className="mr-[6px]">Style:</span>
        <StyleButton name="bold" label="Bold" /><StyleButton name="italic" label="Italic" /><StyleButton name="under" label="Underline" />
        <StyleButton name="strike" label="Strikethrough" /><StyleButton name="color" label="Font colour" sep={false} />
      </div>
      <Rule className="mt-[3px] w-[227px]" />
      <div className="mt-[5px] grid w-[226px] grid-cols-[102px_102px] justify-between gap-y-[5px] pl-[2px]">
        <Field label="Baseline shift" value="0pt" d="M1 11l3-8 3 8M2 8h4M1 14h8M11 2h3v5h-3V4h3M12.500 15V9M10.500 11l2-2 2 2" />
        <Field label="Vertical scale" value="100%" d="M2 2v12M.5 4L2 2l1.500 2M.5 12L2 14l1.500-2M6 5V2h10v3M11 2v12M9 14h4" />
        <Field label="Kerning" value="0" d="M1 9l3-7 3 7M2 7h4M10 2l3 7 3-7M1 13h15M3 11l-2 2 2 2M14 11l2 2-2 2" />
        <Field label="Horizontal scale" value="100%" d="M3 4V1h12v3M9 1v9M8 1v9M10 1v9M6 10h6M1 14h16M3 12l-2 2 2 2M15 12l2 2-2 2" />
      </div>
      <div className="mt-[9px] pl-[5px]"><Check label="Auto Kern" /></div>
    </section>
  );
}

/* ---------- object library ---------- */

type Item = [string, string, boolean?];
const STANDARD: Item[] = [
  ["ok", "Button"], ["check", "Check Box"], ["circle", "Circle"],
  ["content", "Content Area"], ["date", "Date Field"], ["date", "Date/Time Field"],
  ["decimal", "Decimal Field"], ["sign", "Signature Field"], ["drop", "Drop-down List"],
  ["ok", "Email Submit Button", true], ["ok", "HTTP Submit Button"],
  ["image", "Image"], ["imgf", "Image Field"], ["line", "Line"],
  ["list", "List Box"], ["num", "Numeric Field"], ["paper", "Paper Forms Barcode"],
  ["pass", "Password Field"], ["ok", "Print Button"], ["radio", "Radio Button"],
  ["rect", "Rectangle"], ["ok", "Reset Button"], ["subform", "Subform"],
  ["table", "Table"], ["text", "Text"], ["textf", "Text Field"],
  ["date", "Time Field"], ["imgf", "Signature Scribble", true],
];
const BARCODES: Item[] = [
  ["barp", "Aztec"], ["bar", "AUS Post Custom2", true],
  ["bar", "AUS Post Custom3", true], ["bar", "AUS Post Reply Paid"],
  ["bar", "AUS Post Standard", true], ["bar", "Codabar"],
  ["barp", "Code 11"], ["bar", "Code 128"], ["bar", "Code 128A"],
  ["bar", "Code 128B"], ["bar", "Code 128C"], ["bar", "Code 128SSCC"],
  ["bar", "Code 2 of 5 Industrial", true], ["bar", "Code 2 of 5 Interleaved"],
  ["bar", "Code 2 of 5 Matrix", true], ["barp", "Code 2 of 5 Standard"],
  ["bar", "Code 3 of 9"], ["barp", "Code 49"], ["barp", "Code 93"],
  ["bar", "Data Matrix"], ["bar", "EAN13"], ["bar", "EAN8"],
  ["barp", "GS1 DataBar (RSS)"], ["barp", "GS1 DataBar (RSS) Expanded", true],
];

function Items({ items, className = "" }: { items: Item[]; className?: string }) {
  return (
    <ul className={"grid auto-rows-[17px] grid-cols-[112px_112px_1fr] border-x border-[#c9c9c9] bg-white pl-[1px] text-[11px] leading-[17px] " + className}>
      {items.map(([icon, name, wide]) => (
        <li key={name} className={"flex min-w-0 items-center gap-[2px] whitespace-nowrap " + (wide ? "col-span-2" : "")}>
          <Icon name={icon} />
          {name}
        </li>
      ))}
    </ul>
  );
}

function Group({ name, open }: { name: string; open?: boolean }) {
  return (
    <button type="button" aria-expanded={!!open} className="flex h-5 w-full shrink-0 items-center rounded-t-sm bg-gradient-to-b from-[#fafafa] to-[#cbcbcb] text-left text-[11px]">
      <svg viewBox="0 0 8 8" className="ml-[4px] size-2" aria-hidden="true"><path d={open ? "M0 2h8L4 6.500z" : "M2 0v8l4.500-4z"} fill="#111" /></svg>
      <span className="ml-[22px] flex-1">{name}</span>
      <span className="mr-[3px]"><Menu /></span>
    </button>
  );
}

function Scroll({ thumb }: { thumb: string }) {
  return (
    <div className="flex w-[17px] shrink-0 flex-col items-center bg-[#f0f0f0]">
      <svg viewBox="0 0 10 6" className="my-[6px] h-[6px] w-[10px] shrink-0" aria-hidden="true"><path d="M1 5.500l4-4 4 4" fill="none" stroke="#555" strokeWidth="1.600" /></svg>
      <div className={"w-[15px] bg-[#cdcdcd] " + thumb} />
      <svg viewBox="0 0 10 6" className="mt-auto mb-[5px] h-[6px] w-[10px] shrink-0" aria-hidden="true"><path d="M1 .5l4 4 4-4" fill="none" stroke="#555" strokeWidth="1.600" /></svg>
    </div>
  );
}

function Library() {
  return (
    <section className="pr-[5px] pl-[6px] pt-[2px]">
      <Caption />
      <div className="mt-[3px]"><Tabs items={["Object Library", "Fragment Library"]} /></div>
      <div className="mt-[4px] flex h-[431px]">
        <div className="mr-[1px] min-w-0 flex-1 overflow-hidden">
          <Group name="Standard" open />
          <Items items={STANDARD} className="h-[196px] border-b pt-[3px]" />
          <div className="h-[2px]" />
          <Group name="Custom" />
          <div className="h-[2px]" />
          <Group name="Barcodes" open />
          <Items items={BARCODES} className="pt-[3px]" />
        </div>
        <Scroll thumb="h-[281px]" />
      </div>
    </section>
  );
}

function ObjectPanel() {
  return (
    <section className="flex min-h-0 flex-1 flex-col px-[5px] pt-[1px]">
      <Caption />
      <div className="mt-[3px]"><Tabs items={["Object", "Layout", "Accessibility"]} /></div>
      <div className="mt-[6px] flex h-[17px] shrink-0 items-end text-[11px]">
        <span className="h-px w-[9px] bg-[#666]" />
        <button type="button" className="flex h-full">
          <span className="h-full border-t border-l border-[#666] pl-[6px]">Draw</span>
          <svg viewBox="0 0 15 17" className="h-[17px] w-[15px]" aria-hidden="true"><path d="M0 .5L14.500 16.500" stroke="#666" /></svg>
        </button>
        <span className="h-px flex-1 bg-[#666]" />
      </div>
      <div className="mt-[6px] flex w-[227px] items-center justify-between text-[11px]">
        <span>Type:</span>
        <Combo label="Type" value="Text" icon="text" className="w-[187px]" pad="pl-[22px]" />
      </div>
      <Rule className="mt-[3px] w-[227px]" />
      <div className="mt-[10px] flex flex-col gap-[8px]">
        <Check label="Allow Page Breaks within Content" disabled />
        <Check label="Keep with Next" disabled />
        <Check label="This is an Insertion Point Placeholder" disabled />
      </div>
      <div className="mt-auto flex h-[108px] w-[227px] shrink-0 flex-col overflow-hidden text-[11px] leading-[14px]">
        <Rule />
        <span className="mt-[4px]">Presence:</span>
        <Combo label="Presence" value="Visible" className="mt-[3px] w-full" pad="pl-[3px]" />
        <span className="mt-[10px]">Locale:</span>
        <Combo label="Locale" value="Default locale" className="mt-[3px] w-full" pad="pl-[3px]" />
        <span className="mt-[4px] ml-[5px]">English (USA)</span>
      </div>
      <More />
      <div className="h-[3px] shrink-0" />
    </section>
  );
}

/* ---------- design canvas ---------- */

const INCH = 127;
const at = (n: number) => Math.round((n * INCH) / 8);

function HRuler() {
  const d = Array.from({ length: 67 }, (_, i) => {
    const h = i % 8 === 0 ? 13 : i % 4 === 0 ? 9 : 4;
    return `M${at(i) + 15.5} 19V${19 - h}`;
  }).join("");
  return (
    <svg className="h-[20px] min-w-0 flex-1 border-b border-[#666] bg-white" shapeRendering="crispEdges" aria-hidden="true">
      <path d={d} stroke="#555" />
      <path d="M335.500 0V20M1065.500 3V20" stroke="#333" />
      {[0, 1, 2, 3, 4, 5, 6, 7, 8].map((n) => (
        <text key={n} x={n * INCH + 17} y="13" fontSize="12" fill="#111">{n}</text>
      ))}
    </svg>
  );
}

function VRuler() {
  const d = Array.from({ length: 53 }, (_, i) => {
    const w = i % 8 === 0 ? 13 : i % 4 === 0 ? 9 : 5;
    return `M18 ${at(i) + 15.5}H${18 - w}`;
  }).join("");
  return (
    <svg className="h-full w-[19px] shrink-0 border-r border-[#666] bg-white" shapeRendering="crispEdges" aria-hidden="true">
      <path d={d} stroke="#555" />
      <path d="M0 240.500H19" stroke="#222" />
      {[0, 1, 2, 3, 4, 5, 6].map((n) => (
        <text key={n} x="1" y={n * INCH + 28} fontSize="12" fill="#111">{n}</text>
      ))}
    </svg>
  );
}

const DOTS = Array.from({ length: 52 }, (_, r) =>
  Array.from({ length: 67 }, (_, c) => `M${at(c)} ${at(r)}h1v1h-1z`).join("")
).join("");

const ROWS: [string, string, boolean][] = [
  ["Date Field", "h-[62px] border-[#ff8000]", false],
  ["Drop-down List", "h-[63px] border-[#ff8000]", true],
  ["Numeric Field", "h-[62px] border-[#ff8000]", false],
  ["Password Field", "h-[63px] border-[#ff8000]", false],
  ["Text Field", "h-[62px] border-[#ff8000]", true],
  ["Telephone Field", "h-[62px] border-[#ff8000]", true],
  ["Text", "h-[62px] border-[#7b7bff]", true],
  ["Signature Scribble", "h-[124px] border-[#ff8000]", true],
];

function Canvas() {
  return (
    <div className="min-w-0 flex-1 overflow-hidden bg-gradient-to-b from-[#cbcbcb] to-[#fdfdfd]">
      <div className="relative mt-[14px] ml-[14px] flex h-full w-[1052px] flex-col border border-r-2 border-black bg-white shadow-[4px_4px_4px_#777]">
        <svg className="absolute inset-0 size-full" shapeRendering="crispEdges" aria-hidden="true"><path d={DOTS} fill="#8f85f5" /></svg>
        <div className="relative pt-[68px] pl-[588px] font-['Liberation_Sans',Arial,sans-serif]">
          <h1 className="text-[21px] leading-[26px] font-bold text-[#4a4a4a]">WKND</h1>
          <p className="mt-[4px] text-[16px] leading-[24px] text-[#8c8c8c]">Adventures</p>
          <div className="mt-[28px] ml-[32px] h-[23px] w-[206px] bg-[#e4f1fc]/60 pl-[32px] font-['Noto_Sans','Open_Sans',sans-serif] text-[15px] leading-[24px] text-[#dcdcdc]">
            Window Snip
          </div>
        </div>
        <div className="relative mt-[15px] ml-[62px] h-[4px] w-[924px] border-t border-[#b5e4f0] bg-[#0aa5cd]" />
        <div className="relative mt-[62px] ml-[62px] w-[923px] border-r border-[#ff8000] font-['Liberation_Sans',Arial,sans-serif] text-[18px] text-[#a6a6a6]">
          {ROWS.map(([name, cls, gray]) => (
            <div key={name} className={"relative flex items-center border-t border-l " + cls + (name === "Text" ? " -mr-px border-r" : "")}>
              {gray && <i className="absolute -top-[2px] right-0 left-0 h-px bg-[#b9b5b0]" />}
              <span className="w-[291px] shrink-0 pl-[5px] leading-[20px]">{name}</span>
              {name !== "Text" && (
                <div className="relative h-full w-px bg-[#ff8000]">
                  {name !== "Signature Scribble" && <i className="absolute -top-[2px] -left-px h-[4px] w-[3px] bg-[#ff6a00]" />}
                </div>
              )}
              {name === "Drop-down List" && (
                <button type="button" aria-label="Open list" className="mr-[7px] ml-auto flex h-4 w-[15px] items-center justify-center border-2 border-[#333] border-r-[#666] border-b-[#666] bg-[#d4d0c8]">
                  <svg viewBox="0 0 7 5" className="h-[5px] w-[7px]" aria-hidden="true"><path d="M0 0h7L3.500 5z" fill="#000" /></svg>
                </button>
              )}
            </div>
          ))}
        </div>
      </div>
    </div>
  );
}

const VIEWS: [string, string, string][] = [
  ["doc", "Design View", "w-[116px]"],
  ["gold", "Master Pages", "w-[139px]"],
  ["xml", "XML Source", "w-[127px]"],
  ["pdf", "Preview PDF", "w-[133px]"],
  ["html", "Preview HTML", "w-[144px]"],
];

function Workspace() {
  return (
    <main className="flex min-w-0 flex-1 flex-col border-t-2 border-l-2 border-[#777] bg-[#cbcbcb]">
      <div role="tablist" className="flex h-[23px] shrink-0 items-end gap-[3px] border-b border-[#999] pl-[5px]">
        {VIEWS.map(([icon, name, w], i) => (
          <button
            key={name}
            role="tab"
            type="button"
            aria-selected={i === 0}
            className={"flex items-center rounded-t-[5px] border border-b-0 border-[#8f8f8f] pl-[4px] text-[13px] whitespace-nowrap " + w + (i === 0 ? " -mb-px h-[22px] bg-white font-bold" : " h-[21px] bg-gradient-to-b from-[#fafafa] to-[#e4e4e4]")}
          >
            <Icon name={icon} />
            <span className="ml-[4px] flex-1 text-left leading-[18px]">{name}</span>
            {i > 0 && <span className="mr-[2px]"><CloseBox /></span>}
          </button>
        ))}
      </div>
      <div className="flex shrink-0">
        <svg viewBox="0 0 19 20" className="h-[20px] w-[19px] shrink-0 border-r border-b border-[#666] bg-white" aria-hidden="true">
          <path d="M3 5.500h13M5.500 3v12" stroke="#333" strokeWidth="1.200" />
        </svg>
        <HRuler />
      </div>
      <div className="flex min-h-0 flex-1">
        <VRuler />
        <Canvas />
        <Scroll thumb="h-[218px]" />
      </div>
    </main>
  );
}

/* ---------- window chrome ---------- */

const MENUS: [string, string, string][] = [
  ["", "F", "ile"], ["", "E", "dit"], ["", "V", "iew"], ["", "I", "nsert"], ["T", "a", "ble"], ["", "L", "ayout"], ["", "T", "ools"], ["", "W", "indow"], ["", "H", "elp"],
];

function Output() {
  return (
    <section className="relative flex h-[38px] shrink-0 border-t border-[#999] bg-[#f0f0f0] pt-[7px] pr-[6px]">
      <div className="flex w-[17px] flex-col items-center gap-[5px] pt-[2px]">
        <button type="button" aria-label="Close output"><Cross /></button>
        <button type="button" aria-label="Output menu"><Tri /></button>
      </div>
      <div className="min-w-0 flex-1">
        <Tabs items={["Warnings", "Binding", "Log"]} blue={2} plain />
        <div className="mt-[2px] flex h-[7px] bg-white">
          <span className="w-[19px] border-r border-[#ddd]" /><span className="w-[101px] border-r border-[#ddd]" />
          <span className="ml-auto w-[101px] border-x border-[#ddd]" /><span className="w-[80px] border-r border-[#ddd]" /><span className="w-[49px]" />
        </div>
      </div>
      <div className="absolute top-0 left-[922px] h-[5px] w-[78px] bg-[#4a7799] [clip-path:polygon(0_0,100%_0,88%_100%,12%_100%)]" />
    </section>
  );
}

function Status() {
  const cell = "flex h-full items-center border-r border-[#d4d4d4]";
  return (
    <footer className="flex h-[25px] shrink-0 items-center border-t-2 border-[#a5a5a5] bg-[#f0f0f0] pr-[61px] pl-[3px] text-[15px] leading-[22px] whitespace-nowrap">
      <span className="flex-1">For Help, press F1</span>
      <span className={cell + " w-[124px] gap-[5px]"}><Icon name="coords" />0in , 0in</span>
      <span className={cell + " w-[128px] gap-[5px] pl-[4px]"}><Icon name="size" />0in x 0in</span>
      <span className={cell + " w-[129px] gap-[6px] overflow-hidden pl-[4px]"}><Icon name="text" /><span className="min-w-0 overflow-hidden">AF_HEADER_TEXT</span></span>
      <span className={cell + " w-[74px] gap-[6px] pl-[3px]"}><Icon name="gold" />1/2</span>
      {["abcptr", "textf", "shapes", "flow"].map((n) => <span key={n} className={cell + " w-[21px] justify-center"}><Icon name={n} /></span>)}
      <span className={cell + " w-[58px]"} />
      <span className={cell + " w-[58px] pl-[5px]"}>NUM</span>
    </footer>
  );
}

export default function App() {
  return (
    <div className="flex h-screen flex-col bg-white pt-[15px] pr-[164px] pb-[48px] pl-[171px] font-['Noto_Sans','Open_Sans',sans-serif] text-black">
      <div className="flex min-h-0 flex-1 flex-col border border-black bg-white">
        <header className="flex h-[24px] shrink-0 items-center pl-[3px] text-[15px]">
          <Icon name="logo" />
          <h2 className="ml-[5px] flex-1">Designer - [wknd.pdf]</h2>
          {["M0 6.500h11", "M.5 3.500h7v7h-7zM3 3V.5h7.500V8H8", "M.5 .5l10 10M10.500 .5l-10 10"].map((d, i) => (
            <button key={d} type="button" aria-label={["Minimize", "Restore", "Close"][i]} className={i === 2 ? "mr-[22px] ml-[37px]" : i ? "ml-[36px]" : ""}>
              <svg viewBox="0 0 11 11" className="size-[11px]" aria-hidden="true"><path d={d} fill="none" stroke="#111" /></svg>
            </button>
          ))}
        </header>
        <nav className="flex h-[24px] shrink-0 items-center border-b border-[#a0a0a0] pl-[7px] text-[15px]">
          <Icon name="file" />
          <div className="ml-[8px] flex flex-1 gap-[13px]">
            {MENUS.map(([a, b, c]) => <button key={b + c} type="button" className="leading-[22px]">{a}<u className="underline-offset-2">{b}</u>{c}</button>)}
          </div>
          {["M2 8h6", "M1 5h5v4H1zM4 4.500V1.500h5V6H6.500", "M2 2l6 6M8 2L2 8"].map((d, i) => (
            <button key={d} type="button" aria-label={["Minimize document", "Restore document", "Close document"][i]} className="mr-[2px] flex h-5 w-[18px] items-center justify-center border border-[#e3e3e3]">
              <svg viewBox="0 0 10 10" className="size-[9px]" aria-hidden="true"><path d={d} fill="none" stroke="#66788a" strokeWidth="1.700" /></svg>
            </button>
          ))}
        </nav>

        <div className={"flex h-[30px] shrink-0 pt-px " + TAHOMA}>
          <Bar>
            <Grip />
            <Tool name="new" label="New" />
            <button type="button" aria-label="New options" className="flex w-[12px] justify-center"><Tri /></button>
            <Tool name="open" label="Open" /><Tool name="save" label="Save" /><Sep />
            <Tool name="print" label="Print" /><Sep /><Tool name="tag" label="Send" /><Sep />
            <Tool name="undo" label="Undo" /><Tool name="redo" label="Redo" /><Sep /><Tool name="find" label="Find" /><Sep />
            <Tool name="grid" label="Show grid" on /><Tool name="snap" label="Snap to grid" on /><Tool name="area" label="Object boundaries" on /><Sep />
            <Tool name="page1" label="Actual size" /><Tool name="page2" label="Fit page" /><Tool name="page3" label="Fit width" on />
            <Tool name="minus" label="Zoom out" />
            <Combo label="Zoom" value="132%" className="mx-[2px] w-[70px]" />
            <Tool name="plus" label="Zoom in" /><Sep /><Tool name="report" label="Form properties" /><Sep />
            <Tool name="spell" label="Check spelling" /><Tool name="chart" label="Preview" />
          </Bar>
          <Bar>
            <Grip />
            <Combo label="Font" value="Arial" className="ml-px w-[190px]" />
            <Combo label="Size" value="9" className="ml-[2px] w-[48px]" /><Sep />
            <Tool name="bold" label="Bold" /><Tool name="italic" label="Italic" /><Tool name="under" label="Underline" /><Sep />
            <Tool name="left" label="Align left" on /><Tool name="center" label="Align center" /><Tool name="right" label="Align right" /><Tool name="justify" label="Justify" />
          </Bar>
          <Bar>
            <Grip />
            {["al", "ar", "at", "ab"].map((n) => <Tool key={n} name={n} label={"Align " + n} />)}<Sep />
            {["mid", "cen"].map((n) => <Tool key={n} name={n} label={"Center " + n} />)}<Sep />
            {["dh", "dv", "dc"].map((n) => <Tool key={n} name={n} label={"Distribute " + n} />)}<Sep />
            {["o1", "o2", "o3", "o4"].map((n) => <Tool key={n} name={n} label={"Order " + n} />)}<Sep />
            <Tool name="sq" label="Group" /><Tool name="sq" label="Ungroup" /><Tool name="br" label="Merge" />
          </Bar>
          <Bar className="ml-[42px] pr-[28px]">
            <Grip />
            {["tgrid", "g1", "g2", "split", "split2", "g3", "g4", "g1", "g5"].map((n, i) => <Tool key={i} name={n} label={"Table tool " + (i + 1)} />)}
          </Bar>
        </div>

        <div className={"flex h-[27px] shrink-0 border-b border-[#8f8f8f] pl-[4px] " + TAHOMA}>
          <Bar>
            <Grip />
            <Tool name="arrow" label="Select" on /><Tool name="hand" label="Pan" /><Tool name="zoom" label="Magnify" /><Tool name="tabs" label="Tab order" />
          </Bar>
          <Bar className="ml-[781px] border-l">
            <Grip />
            <Combo label="Style" value="<None>" className="ml-px w-[150px]" /><Sep />
            <Tool name="ds1" label="New data style" /><Tool name="ds2" label="Add data style" /><Tool name="ds3" label="Update data style" />
          </Bar>
        </div>

        <div className={"flex min-h-0 flex-1 overflow-hidden " + TAHOMA}>
          <aside className="relative flex w-[399px] shrink-0 flex-col bg-[#f0f0f0] pr-[1px]">
            <Hierarchy />
            <Rule className="mt-[2px]" />
            <DrawingAids />
            <Rule className="mt-[3px]" />
            <FontPanel />
            <div className="absolute top-[361px] right-0 h-[84px] w-[6px] bg-[#4a7799] [clip-path:polygon(0_10%,100%_0,100%_100%,0_90%)]">
              <svg viewBox="0 0 6 84" className="h-[84px] w-[6px]" aria-hidden="true"><path d="M2 22v40" stroke="#cfe0ee" strokeDasharray="1 3" /><path d="M4.500 37v8L0 41z" fill="#fff" /></svg>
            </div>
          </aside>
          <Workspace />
          <aside className="relative flex w-[401px] shrink-0 flex-col border-l-2 border-white bg-[#f0f0f0]">
            <Library />
            <Rule className="mt-[2px]" />
            <ObjectPanel />
            <div className="absolute top-[397px] left-0 h-[78px] w-[5px] bg-[#4a7799] [clip-path:polygon(0_0,100%_10%,100%_90%,0_100%)]">
              <svg viewBox="0 0 5 78" className="h-[78px] w-[5px]" aria-hidden="true"><path d="M2 20v38" stroke="#cfe0ee" strokeDasharray="1 3" /><path d="M0 35v8l4-4z" fill="#fff" /></svg>
            </div>
          </aside>
        </div>

        <div className={TAHOMA}><Output /></div>
        <Status />
      </div>
    </div>
  );
}
